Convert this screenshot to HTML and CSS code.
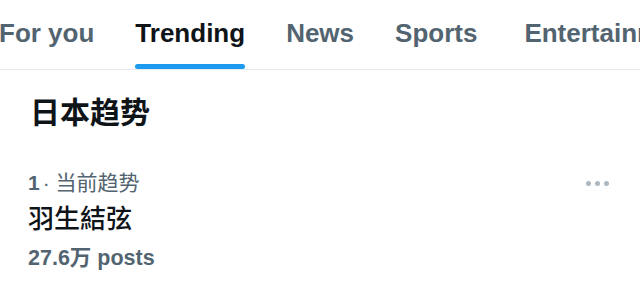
FILE: index.html
```html
<!DOCTYPE html>
<html lang="zh-CN">
<head>
    <meta charset="UTF-8">
    <meta name="viewport" content="width=device-width, initial-scale=1.0">
    <title>Trending</title>
    <link rel="stylesheet" href="styles.css">
</head>
<body>
    <nav class="tabs">
        <div class="tab">For you</div>
        <div class="tab active">Trending</div>
        <div class="tab">News</div>
        <div class="tab">Sports</div>
        <div class="tab">Entertainment</div>
    </nav>

    <h2 class="section-title">日本趋势</h2>

    <div class="trend">
        <div class="trend-body">
            <div class="trend-meta"><span class="rank">1</span>· 当前趋势</div>
            <div class="trend-name">羽生結弦</div>
            <div class="trend-count">27.6万 posts</div>
        </div>
        <div class="more">
            <span class="dot"></span>
            <span class="dot"></span>
            <span class="dot"></span>
        </div>
    </div>
</body>
</html>
```

FILE: styles.css
```css
* {
    margin: 0;
    padding: 0;
    box-sizing: border-box;
}

body {
    font-family: 'Liberation Sans', 'Noto Sans CJK SC', sans-serif;
    background: #ffffff;
    color: #0f1419;
    width: 640px;
    overflow: hidden;
}

.tabs {
    display: flex;
    height: 70px;
    border-bottom: 1px solid #e6eaec;
    white-space: nowrap;
    overflow: hidden;
    gap: 41px;
}

.tab {
    position: relative;
    font-size: 26px;
    font-weight: 700;
    color: #536471;
    line-height: 66px;
    flex-shrink: 0;
}

.tab:first-child {
    margin-left: -1px;
}

.tab:last-child {
    margin-left: 6px;
}

.tab.active {
    color: #0f1419;
}

.tab.active::after {
    content: '';
    position: absolute;
    left: 0;
    right: 0;
    bottom: 0;
    height: 5px;
    border-radius: 3px;
    background: #1d9bf0;
}

.section-title {
    font-family: 'Noto Sans CJK SC', sans-serif;
    font-size: 30px;
    font-weight: 700;
    line-height: 40px;
    padding: 20px 0 0 30px;
}

.trend {
    display: flex;
    justify-content: space-between;
    align-items: flex-start;
    padding: 39px 31px 0 28px;
}

.trend-meta {
    font-size: 21px;
    line-height: 28px;
    color: #536471;
}

.rank {
    font-weight: 700;
    margin-right: 3px;
}

.trend-name {
    font-family: 'Noto Sans CJK SC', sans-serif;
    font-size: 26px;
    font-weight: 500;
    line-height: 40px;
}

.trend-count {
    font-size: 21.5px;
    font-weight: 700;
    line-height: 28px;
    margin-top: 7px;
    color: #536471;
}

.more {
    display: flex;
    gap: 4px;
    padding-top: 12px;
}

.dot {
    width: 5px;
    height: 5px;
    border-radius: 50%;
    background: #aeb8c0;
}
```
